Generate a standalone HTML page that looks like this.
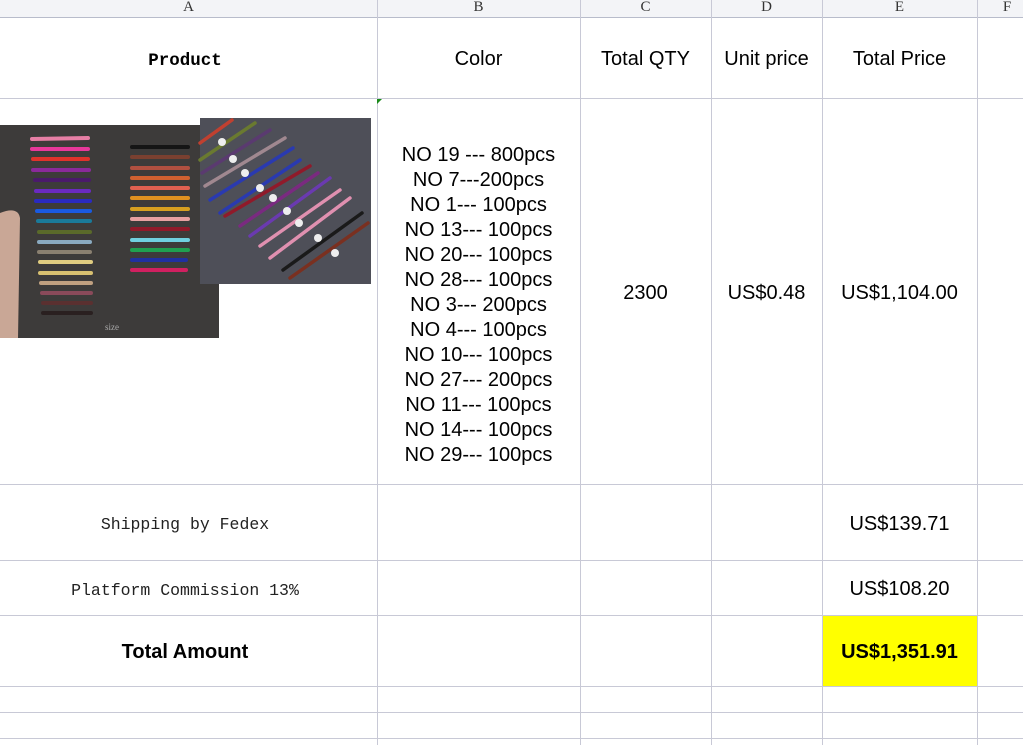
<!DOCTYPE html>
<html><head><meta charset="utf-8"><style>
*{margin:0;padding:0}
body{width:1023px;height:745px;overflow:hidden;background:#fff;position:relative;font-family:"Liberation Sans",Arial,sans-serif;color:#000}
.h{position:absolute;top:0;height:17px;background:#f3f4f7;left:0;width:1023px;border-bottom:1px solid #b8bccb}
.hl{position:absolute;top:-1px;font-family:"Liberation Serif",serif;font-size:15px;color:#333;text-align:center;line-height:17px}
.v{position:absolute;width:1px;background:#c8c9d6;top:0;height:745px}
.r{position:absolute;height:1px;background:#c8c9d6;left:0;width:1023px}
.t{position:absolute;text-align:center;font-size:20px;white-space:nowrap}
.m{font-family:"Liberation Mono",monospace;font-size:16.5px;color:#222}
</style></head><body>
<div class="h"></div>
<div class="hl" style="left:0;width:377px">A</div>
<div class="hl" style="left:377px;width:203px">B</div>
<div class="hl" style="left:580px;width:131px">C</div>
<div class="hl" style="left:711px;width:111px">D</div>
<div class="hl" style="left:822px;width:155px">E</div>
<div class="hl" style="left:977px;width:60px">F</div>
<div style="position:absolute;left:822px;top:615px;width:155px;height:71px;background:#ffff00"></div>
<div class="v" style="left:377px"></div><div class="v" style="left:580px"></div><div class="v" style="left:711px"></div><div class="v" style="left:822px"></div><div class="v" style="left:977px"></div>
<div class="r" style="top:98px"></div><div class="r" style="top:484px"></div><div class="r" style="top:560px"></div><div class="r" style="top:615px"></div><div class="r" style="top:686px"></div><div class="r" style="top:712px"></div><div class="r" style="top:738px"></div>
<div style="position:absolute;left:377px;top:99px;width:0;height:0;border-top:5px solid #1a8a1a;border-right:5px solid transparent"></div>

<div class="t m" style="left:0;width:370px;top:51px;font-weight:bold;font-size:17.5px;color:#000">Product</div>
<div class="t" style="left:377px;width:203px;top:48px">Color</div>
<div class="t" style="left:580px;width:131px;top:48px">Total QTY</div>
<div class="t" style="left:711px;width:111px;top:48px">Unit price</div>
<div class="t" style="left:822px;width:155px;top:48px">Total Price</div>

<div class="t" style="left:377px;width:203px;top:143px;line-height:25px">NO 19 --- 800pcs<br>NO 7---200pcs<br>NO 1--- 100pcs<br>NO 13--- 100pcs<br>NO 20--- 100pcs<br>NO 28--- 100pcs<br>NO 3--- 200pcs<br>NO 4--- 100pcs<br>NO 10--- 100pcs<br>NO 27--- 200pcs<br>NO 11--- 100pcs<br>NO 14--- 100pcs<br>NO 29--- 100pcs</div>
<div class="t" style="left:580px;width:131px;top:282px">2300</div>
<div class="t" style="left:711px;width:111px;top:282px">US$0.48</div>
<div class="t" style="left:822px;width:155px;top:282px">US$1,104.00</div>

<div class="t m" style="left:0;width:370px;top:515px">Shipping by Fedex</div>
<div class="t" style="left:822px;width:155px;top:513px">US$139.71</div>
<div class="t m" style="left:0;width:370px;top:581px">Platform Commission 13%</div>
<div class="t" style="left:822px;width:155px;top:578px">US$108.20</div>
<div class="t" style="left:0;width:370px;top:641px;font-weight:bold">Total Amount</div>
<div class="t" style="left:822px;width:155px;top:641px;font-weight:bold">US$1,351.91</div>

<svg style="position:absolute;left:0;top:118px" width="372" height="221">
<rect x="0" y="7" width="219" height="213" fill="#3d3b3a"/>
<path d="M0 95 Q18 88 20 100 L18 220 L0 220Z" fill="#c9a796"/>
<g stroke-width="4" stroke-linecap="round">
<line x1="32" y1="21" x2="88" y2="20" stroke="#e67fa5"/><line x1="32" y1="31" x2="88" y2="31" stroke="#e8389a"/>
<line x1="33" y1="41" x2="88" y2="41" stroke="#e0322c"/><line x1="33" y1="52" x2="89" y2="52" stroke="#8a2a9a"/>
<line x1="35" y1="62" x2="89" y2="62" stroke="#4a1a6a"/><line x1="36" y1="73" x2="89" y2="73" stroke="#6a2ac0"/>
<line x1="36" y1="83" x2="90" y2="83" stroke="#2a2ac0"/><line x1="37" y1="93" x2="90" y2="93" stroke="#1a5ae0"/>
<line x1="38" y1="103" x2="90" y2="103" stroke="#1a7a9a"/><line x1="39" y1="114" x2="90" y2="114" stroke="#5a6a2a"/>
<line x1="39" y1="124" x2="90" y2="124" stroke="#8aaac0"/><line x1="39" y1="134" x2="90" y2="134" stroke="#8a8070"/>
<line x1="40" y1="144" x2="91" y2="144" stroke="#e0cc80"/><line x1="40" y1="155" x2="91" y2="155" stroke="#d8c070"/>
<line x1="41" y1="165" x2="91" y2="165" stroke="#c0a080"/><line x1="42" y1="175" x2="91" y2="175" stroke="#8a4a5a"/>
<line x1="43" y1="185" x2="91" y2="185" stroke="#5a3030"/><line x1="43" y1="195" x2="91" y2="195" stroke="#2a2020"/>
<line x1="132" y1="29" x2="188" y2="29" stroke="#151515"/><line x1="132" y1="39" x2="188" y2="39" stroke="#7a4030"/>
<line x1="132" y1="50" x2="188" y2="50" stroke="#b05040"/><line x1="132" y1="60" x2="188" y2="60" stroke="#d06030"/>
<line x1="132" y1="70" x2="188" y2="70" stroke="#e06050"/><line x1="132" y1="80" x2="188" y2="80" stroke="#e09020"/>
<line x1="132" y1="91" x2="188" y2="91" stroke="#d8a020"/><line x1="132" y1="101" x2="188" y2="101" stroke="#e8a0a0"/>
<line x1="132" y1="111" x2="188" y2="111" stroke="#901a2a"/><line x1="132" y1="122" x2="188" y2="122" stroke="#70d0e0"/>
<line x1="132" y1="132" x2="188" y2="132" stroke="#20a050"/><line x1="132" y1="142" x2="186" y2="142" stroke="#2030a0"/>
<line x1="132" y1="152" x2="186" y2="152" stroke="#d02060"/>
</g>
<text x="105" y="212" font-size="9" fill="#aaa" font-family="Liberation Serif">size</text>
<rect x="200" y="0" width="171" height="166" fill="#4e4f58"/>
<g stroke-width="3.5" stroke-linecap="round">
<line x1="200" y1="25" x2="232" y2="2" stroke="#c04030"/>
<line x1="200" y1="42" x2="255" y2="5" stroke="#6a7a30"/>
<line x1="202" y1="55" x2="270" y2="12" stroke="#5a3a70"/>
<line x1="205" y1="68" x2="285" y2="20" stroke="#a08890"/>
<line x1="210" y1="82" x2="293" y2="30" stroke="#2a3ab0"/>
<line x1="220" y1="95" x2="300" y2="42" stroke="#2a3ab0"/>
<line x1="225" y1="98" x2="310" y2="48" stroke="#901a2a"/>
<line x1="240" y1="108" x2="318" y2="55" stroke="#7a2a80"/>
<line x1="250" y1="118" x2="330" y2="60" stroke="#6a3ab0"/>
<line x1="260" y1="128" x2="340" y2="72" stroke="#e090b0"/>
<line x1="270" y1="140" x2="350" y2="80" stroke="#e090b0"/>
<line x1="283" y1="152" x2="362" y2="95" stroke="#1a1a1a"/>
<line x1="290" y1="160" x2="368" y2="105" stroke="#7a3020"/>
</g>
<g fill="#eee"><circle cx="222" cy="24" r="4"/><circle cx="233" cy="41" r="4"/><circle cx="245" cy="55" r="4"/><circle cx="260" cy="70" r="4"/><circle cx="273" cy="80" r="4"/><circle cx="287" cy="93" r="4"/><circle cx="299" cy="105" r="4"/><circle cx="318" cy="120" r="4"/><circle cx="335" cy="135" r="4"/></g>
</svg>
</body></html>
